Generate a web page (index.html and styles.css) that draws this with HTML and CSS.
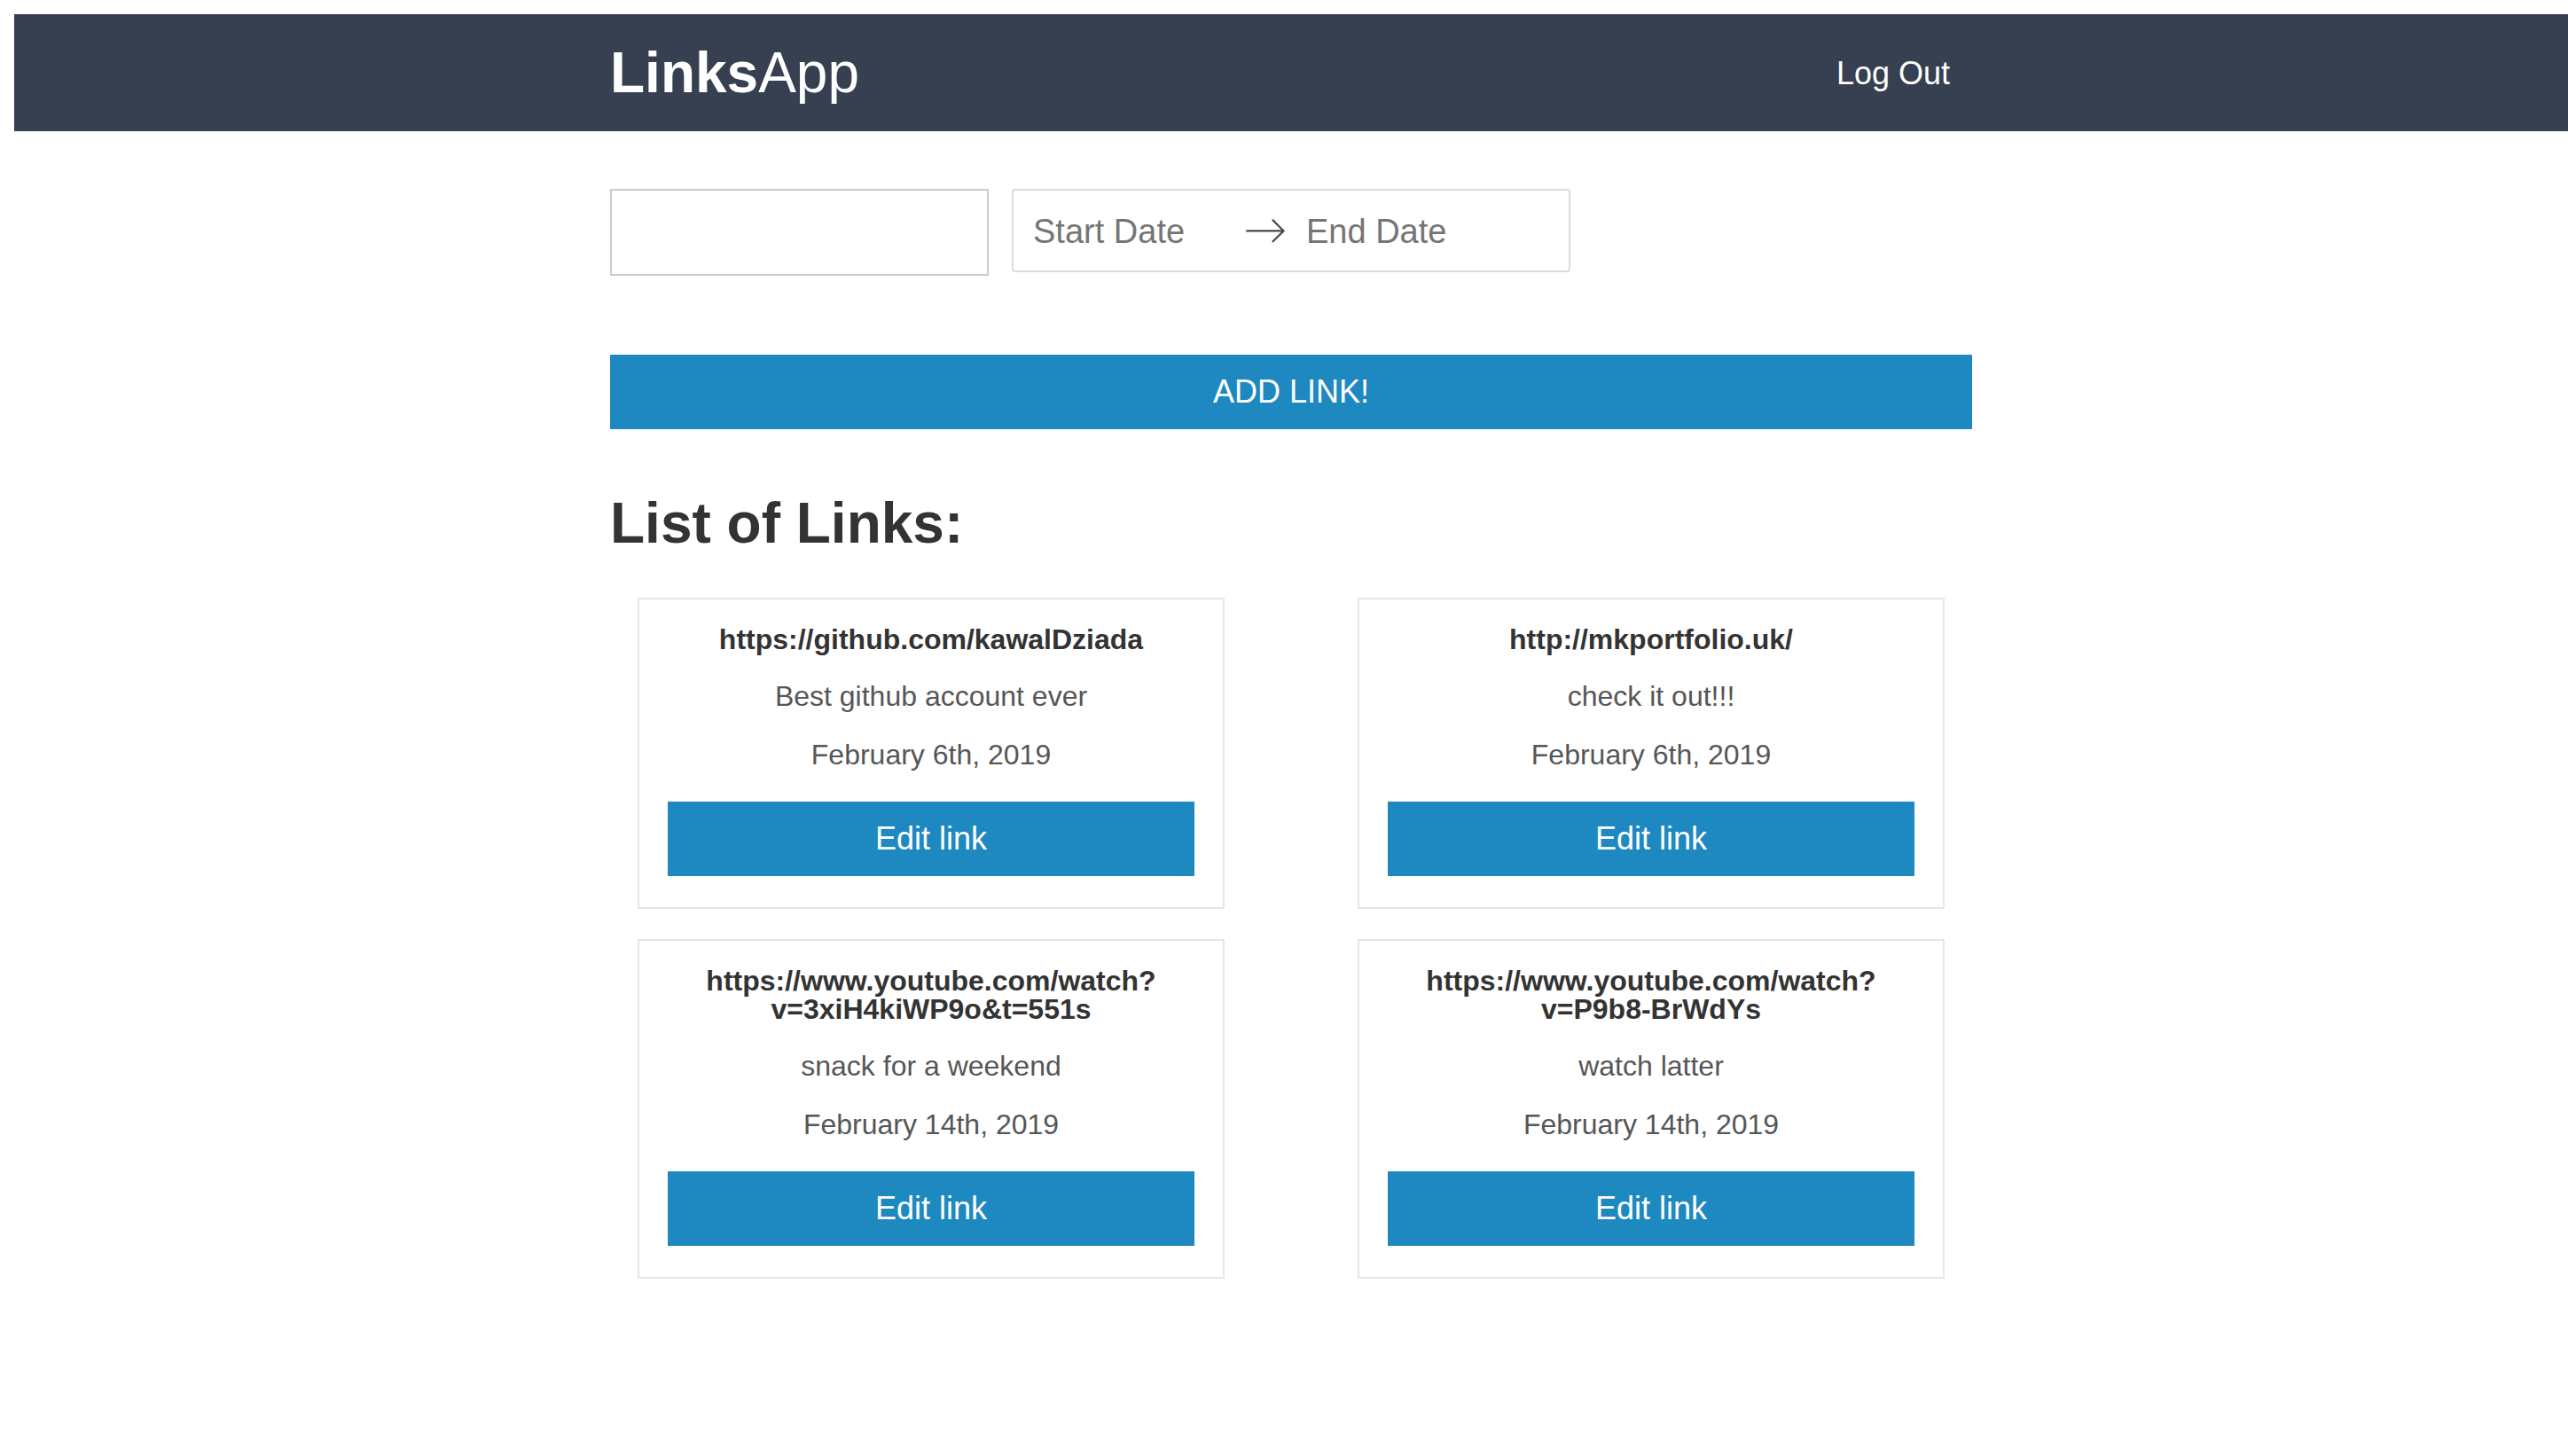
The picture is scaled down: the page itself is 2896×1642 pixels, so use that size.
FILE: index.html
```html
<!DOCTYPE html>
<html lang="en">
<head>
<meta charset="utf-8">
<title>LinksApp</title>
<link rel="stylesheet" href="styles.css">
</head>
<body>
<header class="topbar">
  <div class="topbar-inner">
    <div class="logo"><span class="logo-bold">Links</span>App</div>
    <a class="logout">Log Out</a>
  </div>
</header>
<main class="container">
  <div class="filters">
    <input class="text-input" type="text">
    <div class="date-range">
      <div class="date-input">Start Date</div>
      <svg class="date-arrow" viewBox="0 0 1000 1000"><path d="M694 242l249 250c12 11 12 21 1 32L694 773c-5 5-10 7-16 7s-11-2-16-7c-11-10-11-21 0-32l210-210H68c-13 0-23-10-23-23s10-23 23-23h806L662 275c-21-22 11-54 32-33z"/></svg>
      <div class="date-input">End Date</div>
    </div>
  </div>
  <button class="add-btn">Add link!</button>
  <h1 class="list-title">List of Links:</h1>
  <div class="cards">
    <div class="card">
      <div class="url">https://github.com/kawalDziada</div>
      <div class="desc">Best github account ever</div>
      <div class="desc">February 6th, 2019</div>
      <button class="edit-btn">Edit link</button>
    </div>
    <div class="card">
      <div class="url">http://mkportfolio.uk/</div>
      <div class="desc">check it out!!!</div>
      <div class="desc">February 6th, 2019</div>
      <button class="edit-btn">Edit link</button>
    </div>
    <div class="card">
      <div class="url">https://www.youtube.com/watch?<wbr>v=3xiH4kiWP9o&amp;t=551s</div>
      <div class="desc">snack for a weekend</div>
      <div class="desc">February 14th, 2019</div>
      <button class="edit-btn">Edit link</button>
    </div>
    <div class="card">
      <div class="url">https://www.youtube.com/watch?<wbr>v=P9b8-BrWdYs</div>
      <div class="desc">watch latter</div>
      <div class="desc">February 14th, 2019</div>
      <button class="edit-btn">Edit link</button>
    </div>
  </div>
</main>
</body>
</html>
```
FILE: styles.css
```css
html, body {
  background: #ffffff;
}
body {
  margin: 16px 0 0 16px;
  font-family: "Liberation Sans", Arial, Helvetica, sans-serif;
  color: #333333;
}
.topbar {
  background: #364050;
  height: 132px;
}
.topbar-inner {
  width: 1536px;
  height: 100%;
  margin: 0 auto;
  display: flex;
  align-items: center;
  justify-content: space-between;
  box-sizing: border-box;
  padding-right: 25px;
}
.logo {
  color: #ffffff;
  font-size: 64px;
  line-height: 73px;
  font-weight: 400;
  padding-top: 1px;
}
.logo-bold {
  font-weight: 700;
}
.logout {
  color: #ffffff;
  font-size: 36px;
  line-height: 41px;
  cursor: pointer;
}
.container {
  width: 1536px;
  margin: 0 auto;
  padding-top: 65px;
}
.filters {
  display: flex;
  align-items: flex-start;
  gap: 26px;
}
.text-input {
  width: 427px;
  height: 98px;
  box-sizing: border-box;
  border: 2px solid #cbcbcb;
  margin: 0;
  padding: 0 20px;
  font-size: 32px;
  background: #fff;
}
.date-range {
  display: flex;
  align-items: center;
  border: 2px solid #dbdbdb;
  border-radius: 4px;
  padding-right: 58px;
  background: #fff;
}
.date-input {
  width: 260px;
  box-sizing: border-box;
  padding: 22px 22px 16px;
  border-bottom: 4px solid transparent;
  font-size: 38px;
  line-height: 48px;
  color: #757575;
}
.date-arrow {
  width: 48px;
  height: 48px;
  fill: #484848;
  flex: none;
}
.add-btn {
  display: block;
  width: 100%;
  height: 84px;
  margin-top: 89px;
  border: none;
  padding: 0;
  background: #1e88c0;
  color: #ffffff;
  font-family: inherit;
  font-size: 36px;
  line-height: 84px;
  text-transform: uppercase;
}
.list-title {
  margin: 69px 0 47px;
  font-size: 64px;
  line-height: 74px;
  font-weight: 700;
  color: #333333;
}
.cards {
  display: grid;
  grid-template-columns: 662px 662px;
  justify-content: space-between;
  row-gap: 34px;
  padding: 0 31px;
}
.card {
  border: 2px solid #e6e6e6;
  padding: 29px 32px 35px;
  display: flex;
  flex-direction: column;
  align-items: center;
  text-align: center;
}
.url {
  font-size: 32px;
  line-height: 32px;
  font-weight: 700;
  color: #333333;
}
.desc {
  margin-top: 30px;
  font-size: 32px;
  line-height: 36px;
  color: #565656;
}
.edit-btn {
  margin-top: 35px;
  width: 100%;
  height: 84px;
  border: none;
  padding: 0;
  background: #1e88c0;
  color: #ffffff;
  font-family: inherit;
  font-size: 36px;
  line-height: 84px;
}
```
